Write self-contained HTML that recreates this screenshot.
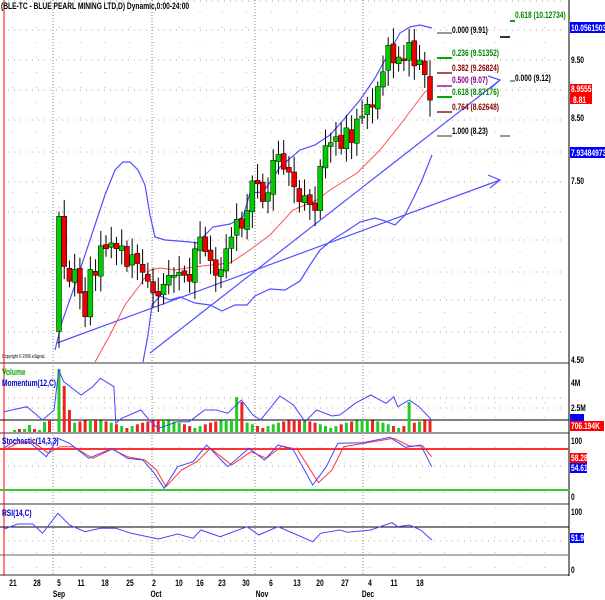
<!DOCTYPE html>
<html><head><meta charset="utf-8"><style>
html,body{margin:0;padding:0;background:#fff;width:605px;height:600px;overflow:hidden}
svg{display:block}
text{font-family:"Liberation Sans",sans-serif;font-size:9px;font-weight:bold}
</style></head><body>
<svg id="s" width="605" height="600" viewBox="0 0 605 600" xmlns="http://www.w3.org/2000/svg">
<rect width="605" height="600" fill="#fff"/>
<g id="grid"></g>
<g stroke="#999" stroke-width="2" fill="none">
<line x1="0" y1="363" x2="569" y2="363"/>
<line x1="0" y1="433" x2="569" y2="433"/>
<line x1="0" y1="504" x2="569" y2="504"/>
<line x1="0" y1="575" x2="569" y2="575"/>
</g>
<line x1="569" y1="0" x2="569" y2="576" stroke="#000" stroke-width="1"/>
<line x1="4" y1="0" x2="4" y2="576" stroke="#f00" stroke-width="1"/>
<text x="1" y="9" fill="#000">(BLE-TC - BLUE PEARL MINING LTD,D) Dynamic,0:00-24:00</text>
<text x="2" y="358" fill="#000" style="font-size:5px;font-weight:normal">Copyright © 2006 eSignal.</text>
<g fill="none" stroke="#5050ff" stroke-width="1.2">
<polyline points="55,350 62,322 75,285 90,240 105,195 115,170 123,162 130,162 138,170 145,185 150,215 155,237 165,240 178,241 190,242 197,243 213,227 230,224 243,217 250,193 263,192 273,178 280,167 300,150 315,145 330,135 345,118 360,100 375,78 385,60 400,33 410,27 420,25 432,28"/>
<polyline points="143,362 148,335 152,305 160,296 170,300 180,297 195,303 210,305 222,311 235,305 247,305 255,296 270,289 285,290 300,281 310,265 320,250 332,240 345,232 360,222 375,218 385,221 395,225 405,215 415,195 422,180 432,155"/>
<polyline points="57,343 500,180"/>
<polyline points="150,353 500,80"/>
<polyline points="488,175 500,180 490,188"/>
<polyline points="488,76 500,80 491,88"/>
</g>
<polyline fill="none" stroke="#ff5050" stroke-width="1" points="95,362 110,335 125,305 140,285 150,270 160,268 175,270 193,267 230,263 247,252 270,235 293,210 317,200 330,190 357,173 380,150 400,125 415,105 425,92 432,88"/>
<g id="candles"></g>
<g stroke-width="2">
<line x1="437" y1="33" x2="452" y2="33" stroke="#999"/>
<line x1="437" y1="58" x2="452" y2="58" stroke="#0a0"/>
<line x1="437" y1="73" x2="452" y2="73" stroke="#a55"/>
<line x1="437" y1="86" x2="452" y2="86" stroke="#b050b0"/>
<line x1="437" y1="97" x2="452" y2="97" stroke="#0a0"/>
<line x1="437" y1="112" x2="452" y2="112" stroke="#a55"/>
<line x1="437" y1="136" x2="452" y2="136" stroke="#999"/>
<line x1="500" y1="37" x2="510" y2="37" stroke="#333"/>
<line x1="500" y1="136" x2="510" y2="136" stroke="#999"/>
<line x1="510" y1="21" x2="515" y2="21" stroke="#0a0"/>
<line x1="510" y1="81" x2="515" y2="81" stroke="#999"/>
</g>
<text x="452" y="33" fill="#000">0.000 (9.91)</text>
<text x="452" y="56" fill="#080">0.236 (9.51352)</text>
<text x="452" y="71" fill="#800">0.382 (9.26824)</text>
<text x="452" y="83" fill="#808">0.500 (9.07)</text>
<text x="452" y="95" fill="#080">0.618 (8.87176)</text>
<text x="452" y="110" fill="#800">0.764 (8.62648)</text>
<text x="452" y="134" fill="#000">1.000 (8.23)</text>
<text x="515" y="18" fill="#080">0.618 (10.12734)</text>
<text x="515" y="81" fill="#000">0.000 (9.12)</text>
<g fill="#000">
<text x="571" y="63">9.50</text><text x="571" y="121">8.50</text><text x="571" y="184">7.50</text>
<text x="571" y="363">4.50</text>
<text x="571" y="386">4M</text><text x="571" y="411">2.5M</text>
<text x="571" y="444">100</text><text x="571" y="500">0</text>
<text x="571" y="515">100</text><text x="571" y="573">0</text>
</g>
<rect x="570" y="22" width="35" height="11" fill="#00f"/><text x="571" y="31" fill="#fff">10.0561503</text>
<rect x="570" y="84" width="22" height="20" fill="#f00"/><text x="571" y="92" fill="#fff">8.9555</text><text x="573" y="103" fill="#fff">8.81</text>
<rect x="570" y="147" width="35" height="11" fill="#00f"/><text x="571" y="156" fill="#fff">7.93484973</text>
<rect x="570" y="414" width="14" height="8" fill="#00f"/>
<rect x="570" y="421" width="34" height="10" fill="#f00"/><text x="571" y="429" fill="#fff">706.194K</text>
<rect x="570" y="453" width="17" height="10" fill="#f00"/><text x="571" y="461" fill="#fff">58.28</text>
<rect x="570" y="463" width="17" height="10" fill="#00f"/><text x="571" y="471" fill="#fff">54.61</text>
<rect x="570" y="533" width="14" height="10" fill="#00f"/><text x="571" y="541" fill="#fff">51.9</text>
<line x1="0" y1="420" x2="569" y2="420" stroke="#000"/>
<line x1="0" y1="449" x2="569" y2="449" stroke="#f33" stroke-width="2"/>
<line x1="0" y1="490" x2="569" y2="490" stroke="#3c3" stroke-width="2"/>
<line x1="0" y1="527" x2="569" y2="527" stroke="#000"/>
<line x1="0" y1="555" x2="569" y2="555" stroke="#666"/>
<g id="vol"></g>
<text x="2" y="375" fill="#0a0">Volume</text>
<text x="2" y="386" fill="#00c">Momentum(12,C)</text>
<text x="2" y="444" fill="#00c">Stochastic(14,3,3)</text>
<text x="2" y="516" fill="#00c">RSI(14,C)</text>
<g id="lines" fill="none" stroke-width="1"></g>
<g fill="#000" id="dates"></g>
</svg>
<script>
var NS="http://www.w3.org/2000/svg";
function el(p,t,a,txt){var e=document.createElementNS(NS,t);for(var k in a)e.setAttribute(k,a[k]);if(txt)e.textContent=txt;document.getElementById(p).appendChild(e);return e;}
var G="grid";
[152,182,212,240,272,300,332,30,60,90,120,1,398,408,466,541].forEach(function(y){el(G,"line",{x1:8,y1:y,x2:565,y2:y,stroke:"#aaa","stroke-dasharray":"1 5"});});
[13,37,59,81,105,130,154,179,200,222,246,271,297,320,345,370,394,420,445,470,495,520,545].forEach(function(x){el(G,"line",{x1:x,y1:12,x2:x,y2:575,stroke:"#bbb","stroke-dasharray":"1 14"});});
[53,152,255,363].forEach(function(x){el(G,"line",{x1:x,y1:0,x2:x,y2:575,stroke:"#888","stroke-dasharray":"1 2"});});
var c=[6.85,6.0,5.75,5.95,5.55,5.15,5.95,5.85,6.35,6.3,6.4,6.3,6.35,6.0,6.2,6.05,5.9,5.75,5.55,5.5,5.7,5.85,5.85,5.9,5.85,5.75,6.3,6.5,6.25,6.1,5.85,5.95,6.3,6.5,6.8,6.65,6.95,7.45,7.4,7.1,7.25,7.8,7.9,7.65,7.6,7.35,7.1,7.2,7.05,6.95,7.7,8.05,8.1,8.2,8.0,8.35,8.1,8.5,8.55,8.75,8.7,9.05,9.3,9.75,9.45,9.55,9.5,9.8,9.4,9.5,9.25,8.82];
function Y(p){return 60+(9.5-p)*59;}
var o=4.9,step=(430-59)/71;
var spikes={0:63,1:46,2:22,34:35,35:30,67:30};
for(var i=0;i<c.length;i++){
 var x=59+i*step,cl=c[i],up=cl>=o,hi=Math.max(o,cl)+0.08+0.2*Math.abs(Math.sin(i*1.7)),lo=Math.min(o,cl)-0.08-0.2*Math.abs(Math.cos(i*2.3));
 el("candles","line",{x1:x,y1:Y(hi),x2:x,y2:Y(lo),stroke:"#000"});
 var t=Y(Math.max(o,cl)),h=Math.max(2,Y(Math.min(o,cl))-t);
 el("candles","rect",{x:x-2.5,y:t,width:5,height:h,fill:up?"#0c0":"#e00",stroke:"#000","stroke-width":0.5});
 var vh=spikes[i]!==undefined?spikes[i]:(4+8*Math.abs(Math.sin(i*2.9)));
 el("vol","rect",{x:x-1.5,y:432-vh,width:3,height:vh,fill:up?"#2c2":"#e22"});
 o=cl+0.03*Math.sin(i*5);
}
[13,18,23,28,33,38,43,48].forEach(function(x,k){var h=[2,3,3,7,3,2,10,12][k];el("vol","rect",{x:x,y:432-h,width:3,height:h,fill:k%3==1?"#e22":"#2c2"});});
function pl(pts,col,w){var s=pts.map(function(p){return (p[0]/2.59).toFixed(1)+","+(p[1]/3+360).toFixed(1)}).join(" ");el("lines","polyline",{points:s,stroke:col,"stroke-width":w||1,fill:"none"});}
pl([[10,155],[70,140],[110,180],[140,150],[152,30],[165,65],[210,105],[240,80],[260,55],[295,80],[300,190],[315,175],[365,150],[390,185],[410,205],[460,185],[490,185],[530,150],[560,150],[590,160],[625,120],[655,165],[675,180],[725,108],[760,135],[790,185],[820,150],[860,168],[880,165],[920,130],[960,105],[1000,130],[1020,110],[1030,140],[1060,120],[1085,140],[1118,180]],"#44f");
pl([[10,270],[45,250],[85,245],[125,280],[155,260],[190,260],[240,295],[290,268],[330,290],[375,300],[405,330],[430,380],[470,330],[510,305],[545,265],[600,315],[650,275],[690,295],[730,258],[770,268],[825,368],[860,330],[890,260],[950,248],[1020,235],[1060,258],[1095,258],[1118,290]],"#f33");
pl([[10,265],[40,240],[80,250],[120,290],[150,235],[180,250],[230,295],[290,265],[330,295],[370,300],[400,340],[425,385],[460,320],[500,305],[535,255],[590,320],[645,265],[685,300],[720,255],[760,270],[810,375],[845,320],[875,250],[940,248],[1010,232],[1050,262],[1090,255],[1118,320]],"#44f");
pl([[10,508],[45,492],[85,492],[110,520],[150,460],[180,495],[220,515],[260,505],[300,505],[340,520],[410,537],[460,522],[500,535],[520,510],[570,530],[640,500],[670,525],[720,500],[770,525],[810,545],[830,520],[880,510],[900,517],[960,510],[1015,488],[1030,500],[1060,495],[1090,510],[1118,540]],"#44f");
var d=[[13,"21"],[37,"28"],[59,"5"],[81,"11"],[105,"18"],[130,"25"],[154,"2"],[179,"10"],[200,"16"],[222,"23"],[246,"30"],[271,"6"],[297,"13"],[320,"20"],[345,"27"],[370,"4"],[394,"11"],[420,"18"]];
d.forEach(function(a){el("dates","text",{x:a[0],y:586,"text-anchor":"middle"},a[1]);});
[[59,"Sep"],[156,"Oct"],[262,"Nov"],[368,"Dec"]].forEach(function(a){el("dates","text",{x:a[0],y:597,"text-anchor":"middle"},a[1]);});
// condense all text
var ts=document.querySelectorAll("text");
for(var j=0;j<ts.length;j++){var L=ts[j].getComputedTextLength();if(L>0){ts[j].setAttribute("textLength",(L*0.74).toFixed(1));ts[j].setAttribute("lengthAdjust","spacingAndGlyphs");}}
</script>
</body></html>
